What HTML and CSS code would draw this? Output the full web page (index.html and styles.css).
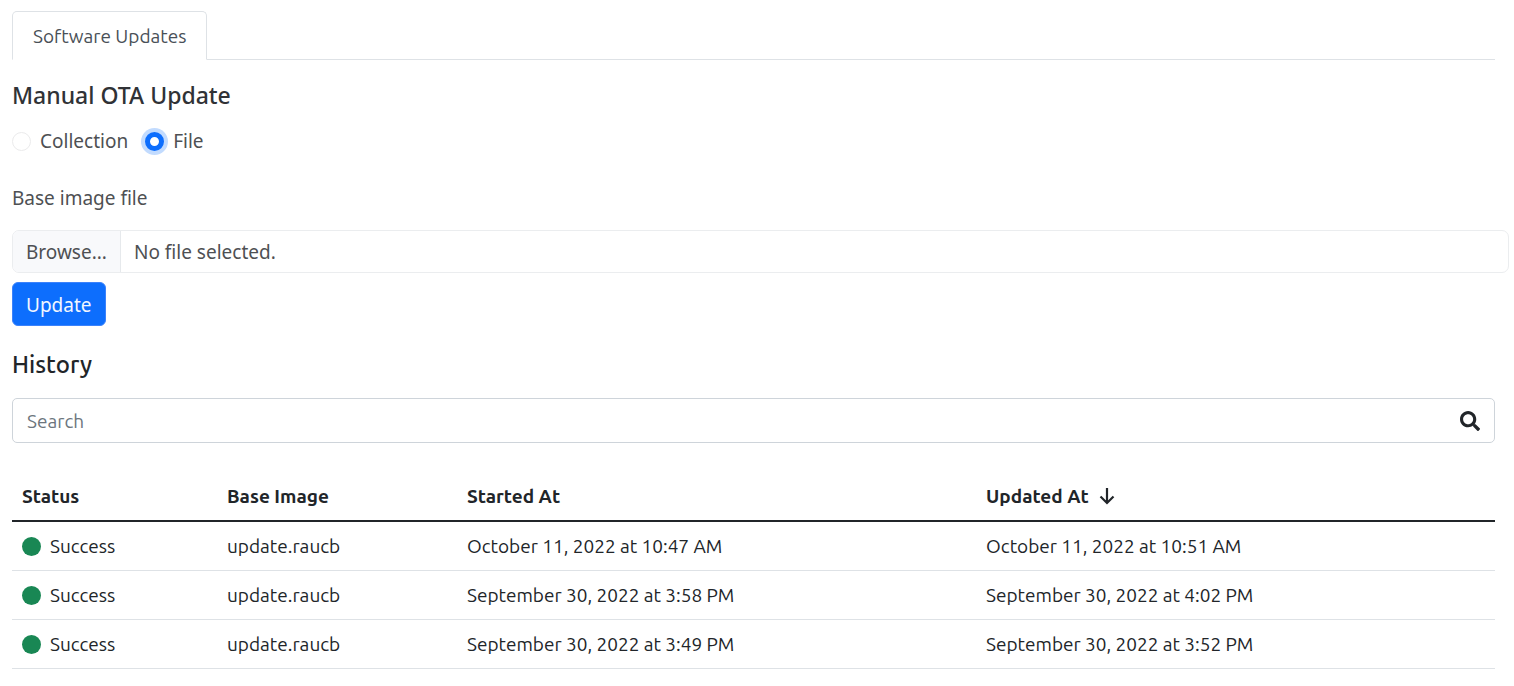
FILE: index.html
```html
<!DOCTYPE html>
<html lang="en">
<head>
<meta charset="utf-8">
<meta name="viewport" content="width=device-width, initial-scale=1">
<title>Software Updates</title>
<link rel="stylesheet" href="styles.css">
</head>
<body>
<main class="page">
  <nav class="tabs">
    <a class="tab" href="#updates" aria-current="page">Software Updates</a>
  </nav>

  <form class="update-form" id="updates">
    <h2 class="title title-form">Manual OTA Update</h2>
    <div class="choices">
      <label class="choice"><input class="radio" type="radio" name="source">Collection</label>
      <label class="choice"><input class="radio" type="radio" name="source" checked>File</label>
    </div>
    <label class="field-label" for="image-file">Base image file</label>
    <div class="file-control">
      <span class="file-button">Browse...</span>
      <span class="file-name">No file selected.</span>
      <input class="file-input" type="file" id="image-file">
    </div>
    <button class="update-button" type="button">Update</button>
  </form>

  <section class="history">
    <h2 class="title">History</h2>
    <div class="search">
      <input class="search-input" type="text" placeholder="Search" aria-label="Search">
      <svg class="search-icon" viewBox="0 0 512 512" aria-hidden="true"><path fill="currentColor" d="M505 442.700 405.300 343c-4.500-4.500-10.600-7-17-7H372c27.600-35.300 44-79.700 44-128C416 93.100 322.900 0 208 0S0 93.100 0 208s93.100 208 208 208c48.300 0 92.700-16.400 128-44v16.300c0 6.400 2.500 12.500 7 17l99.700 99.700c9.400 9.400 24.600 9.400 33.900 0l28.300-28.300c9.400-9.400 9.400-24.600.1-34zM208 336c-70.700 0-128-57.200-128-128 0-70.700 57.200-128 128-128 70.700 0 128 57.200 128 128 0 70.700-57.200 128-128 128z"/></svg>
    </div>
    <table class="table">
      <colgroup><col class="col-status"><col class="col-image"><col class="col-started"><col></colgroup>
      <thead>
        <tr>
          <th scope="col">Status</th><th scope="col">Base Image</th><th scope="col">Started At</th>
          <th scope="col" aria-sort="descending"><span class="sorted">Updated At <svg class="arrow" viewBox="0 0 16 18" aria-hidden="true"><path d="M8 1v15M1.500 9.500 8 16 14.500 9.500" fill="none" stroke="currentColor" stroke-width="2.200"/></svg></span></th>
        </tr>
      </thead>
      <tbody>
        <tr><td><span class="status">Success</span></td><td>update.raucb</td><td>October 11, 2022 at 10:47 AM</td><td>October 11, 2022 at 10:51 AM</td></tr>
        <tr><td><span class="status">Success</span></td><td>update.raucb</td><td>September 30, 2022 at 3:58 PM</td><td>September 30, 2022 at 4:02 PM</td></tr>
        <tr><td><span class="status">Success</span></td><td>update.raucb</td><td>September 30, 2022 at 3:49 PM</td><td>September 30, 2022 at 3:52 PM</td></tr>
      </tbody>
    </table>
  </section>
</main>
</body>
</html>
```

FILE: styles.css
```css
* { box-sizing: border-box; }

body {
  margin: 0;
  background: #fff;
  color: #212529;
  font: 19px/28px Ubuntu, "Noto Sans", sans-serif;
}

.page { padding: 11px 19px 17px 12px; }

.tabs {
  display: flex;
  border-bottom: 1px solid #dee2e6;
}

.tab {
  margin-bottom: -1px;
  padding: 10px 20px 9px;
  border: 1px solid #dee2e6;
  border-bottom-color: #fff;
  border-radius: 5px 5px 0 0;
  background: #fff;
  color: #495057;
  text-decoration: none;
}

.update-form {
  margin-right: -14px;
  padding-top: 20px;
  color: #4e5053;
  font-family: "Noto Sans", sans-serif;
}

.title {
  margin: 0;
  font-size: 24px;
  font-weight: 500;
  line-height: 30px;
}

.title-form {
  color: #303236;
  font-size: 23px;
}

.choices {
  display: flex;
  gap: 17px;
  padding-top: 17px;
}

.choice {
  display: flex;
  align-items: center;
  gap: 9px;
}

.radio {
  appearance: none;
  width: 19px;
  height: 19px;
  margin: 0;
  border: 1px solid #ebebec;
  border-radius: 50%;
  background: #fff;
}

.radio:checked {
  border: 5px solid #0d6efd;
  box-shadow: 0 0 0 4px #c2dbfe;
}

.field-label {
  display: block;
  padding: 29px 0 18px;
}

.file-control {
  position: relative;
  display: flex;
  overflow: hidden;
  border: 1px solid #ebedef;
  border-radius: 7px;
}

.file-button {
  padding: 7px 13px 6px;
  border-right: 1px solid #e6e9ec;
  background: #f8f9fb;
}

.file-name { padding: 7px 13px 6px; }

.file-input {
  position: absolute;
  inset: 0;
  width: 100%;
  opacity: 0;
}

.update-button {
  display: block;
  margin-top: 9px;
  padding: 8px 13px 6px;
  border: 1px solid #3b82fb;
  border-radius: 6px;
  background: #0d6efd;
  color: #f2f7ff;
  font: inherit;
}

.history { padding-top: 24px; }

.search {
  display: flex;
  align-items: center;
  margin-top: 18px;
  padding-right: 14px;
  border: 1px solid #ced4da;
  border-radius: 5px;
}

.search-input {
  flex: 1;
  min-width: 0;
  padding: 8px 14px 7px;
  border: 0;
  background: transparent;
  color: inherit;
  font: inherit;
}

.search-input::placeholder { color: #6c757d; opacity: 1; }

.search-icon { width: 20px; height: 20px; }

.table {
  width: 100%;
  margin-top: 29px;
  border-collapse: collapse;
  table-layout: fixed;
}

.col-status { width: 205px; }
.col-image { width: 240px; }
.col-started { width: 35%; }

.table th,
.table td {
  padding: 10px;
  border-bottom: 1px solid #dee2e6;
  text-align: left;
}

.table th {
  border-bottom: 2px solid #212529;
  font-weight: 700;
}

.sorted {
  display: inline-flex;
  align-items: center;
  gap: 10px;
}

.arrow { width: 16px; height: 18px; }

.status {
  display: flex;
  align-items: center;
  gap: 9px;
}

.status::before {
  width: 19px;
  height: 19px;
  border-radius: 50%;
  background: #198754;
  content: "";
}
```
